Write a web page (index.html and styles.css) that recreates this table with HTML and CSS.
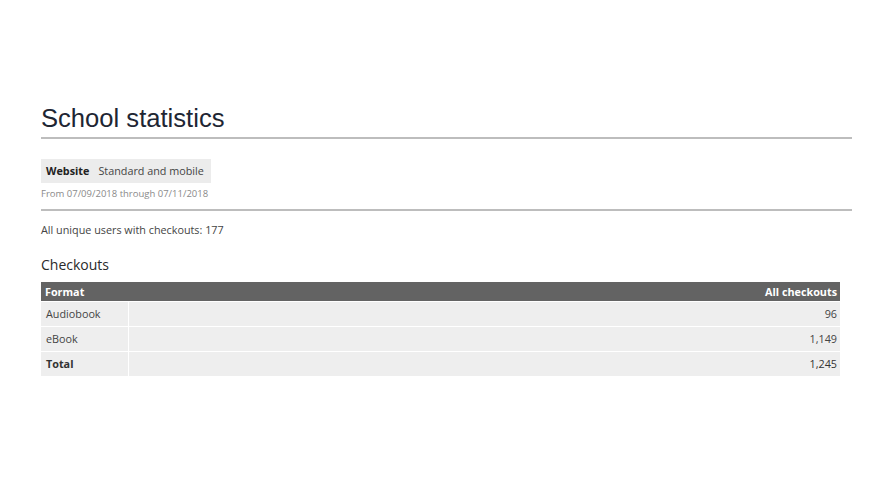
FILE: index.html
```html
<!DOCTYPE html>
<html>
<head>
<meta charset="utf-8">
<link rel="stylesheet" href="styles.css">
</head>
<body>
<main class="page">
  <h1 class="title">School statistics</h1>
  <section class="filters">
    <div class="tabs">
      <span class="tab-label">Website</span>
      <span class="tab-value">Standard and mobile</span>
    </div>
    <div class="range">From 07/09/2018 through 07/11/2018</div>
  </section>
  <p class="summary">All unique users with checkouts: 177</p>
  <h2 class="section-title">Checkouts</h2>
  <table class="stats">
    <thead>
      <tr><th class="col-format">Format</th><th class="col-num">All checkouts</th></tr>
    </thead>
    <tbody>
      <tr><td class="col-format">Audiobook</td><td class="col-num">96</td></tr>
      <tr><td class="col-format">eBook</td><td class="col-num">1,149</td></tr>
      <tr class="total"><td class="col-format">Total</td><td class="col-num">1,245</td></tr>
    </tbody>
  </table>
</main>
</body>
</html>
```
FILE: styles.css
```css
html, body {
  margin: 0;
  padding: 0;
  background: #fff;
}
body {
  font-family: "Open Sans", "Noto Sans", sans-serif;
  color: #444;
}
.page {
  padding: 101px 35px 0 41px;
}
.title {
  font-family: "Liberation Sans", Arial, sans-serif;
  font-weight: normal;
  font-size: 25.6px;
  line-height: 34px;
  color: #1e2633;
  margin: 0;
  padding-bottom: 2px;
  border-bottom: 2px solid #bdbdbd;
}
.filters {
  padding-top: 19px;
  padding-bottom: 8px;
  border-bottom: 2px solid #bdbdbd;
}
.tabs {
  display: inline-flex;
  background: #ececec;
  height: 24px;
  align-items: center;
  font-size: 10.8px;
  padding: 0 7px 0 5px;
  gap: 9px;
}
.tab-label {
  font-weight: bold;
  color: #222;
}
.tab-value {
  color: #444;
}
.range {
  margin-top: 4px;
  font-size: 9.5px;
  color: #8a8a8a;
  line-height: 14px;
}
.summary {
  margin: 11px 0 0;
  font-size: 10.8px;
  line-height: 16px;
  color: #444;
}
.section-title {
  margin: 17px 0 0;
  font-size: 14px;
  font-weight: normal;
  color: #2a2a2a;
  line-height: 20px;
}
.stats {
  margin-top: 7px;
  width: 799px;
  border-collapse: collapse;
  font-size: 10.8px;
}
.stats th {
  background: #636363;
  color: #fff;
  font-weight: bold;
  height: 19px;
  padding: 0 3px 0 4px;
  text-align: left;
}
.stats th.col-num { text-align: right; }
.stats td {
  background: #eeeeee;
  height: 24px;
  padding: 0 3px 0 5px;
  border-top: 1px solid #fff;
  color: #444;
}
.stats td.col-format {
  width: 79px;
  border-right: 1px solid #fff;
}
.stats td.col-num { text-align: right; }
.stats .total td { color: #333; }
.stats .total td.col-format { font-weight: bold; }
```
